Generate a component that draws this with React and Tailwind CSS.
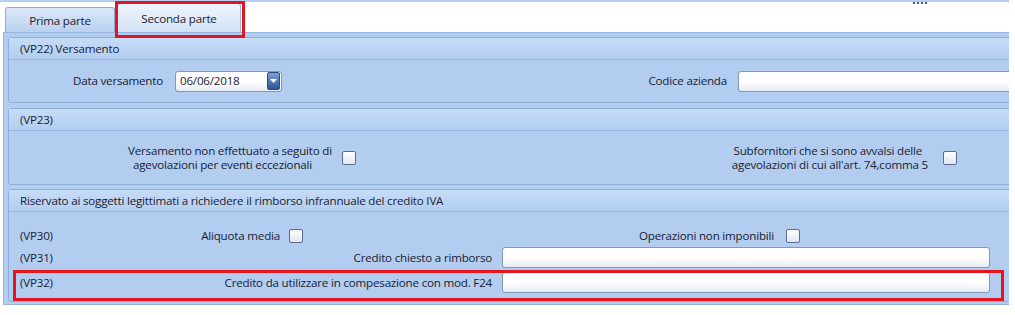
import React from "react";

// Two-part VAT form screen: tabs, then three grouped sections.

const Checkbox = ({ className = "" }) => (
  <div
    className={`h-[14px] w-[14px] shrink-0 rounded-[2px] border border-[#5b6d8c] bg-gradient-to-b from-white to-[#dfe7f3] ${className}`}
  />
);

const TextBox = ({ className = "", children }) => (
  <div
    className={`flex h-[21px] shrink-0 items-center rounded-[3px] border border-[#8797b3] bg-gradient-to-b from-white via-white to-[#e6ecf5] ${className}`}
  >
    {children}
  </div>
);

const Section = ({ title, bodyHeight, className = "", children }) => (
  <div
    className={`-mr-[12px] rounded-[3px] border border-[#8fadd8] bg-[#b2cdf0] ${className}`}
  >
    <div className="flex h-[22px] items-center border-b border-[#98b6de] bg-gradient-to-b from-[#c6dcf7] to-[#b3cef1] pl-[11px]">
      {title}
    </div>
    <div className={bodyHeight}>{children}</div>
  </div>
);

const App = () => {
  return (
    <div className="relative h-[315px] w-[1015px] overflow-hidden bg-white font-['Open_Sans',sans-serif] text-[11.6px] tracking-[-0.2px] text-[#1a2230]">
      <div className="w-[1009px] overflow-hidden">
        {/* top strip */}
        <div className="h-[2px] bg-[#b6cff0]" />

        {/* tabs */}
        <div className="flex h-[30px] items-end pl-[5px]">
          <div className="flex h-[25px] w-[110px] items-center justify-center rounded-t-[3px] border border-b-0 border-[#8eabd6] bg-gradient-to-b from-[#dce8f8] to-[#b9d1f0] pt-[1px]">
            Prima parte
          </div>
          <div className="ml-[2px] flex h-[29px] w-[124px] items-center justify-center rounded-t-[3px] border border-b-0 border-[#9ab7de] bg-gradient-to-b from-[#eef4fd] to-[#d3e3f7] pt-[2px]">
            Seconda parte
          </div>
        </div>

        {/* main panel */}
        <div className="ml-[3px] h-[273px] border border-r-0 border-[#97b4dc] bg-[#b1cdf0] pl-[4px] pt-[4px]">
          <Section title="(VP22) Versamento" bodyHeight="h-[42px]">
            <div className="flex h-full items-center">
              <div className="w-[154px] shrink-0 text-right">Data versamento</div>
              <TextBox className="ml-[12px] w-[107px] justify-between pl-[4px] pr-[1px]">
                <span>06/06/2018</span>
                <div className="flex h-[18px] w-[13px] items-center justify-center rounded-[2px] border border-[#2c4a7d] bg-gradient-to-b from-[#7d9fd3] to-[#2f5493]">
                  <svg width="7" height="4" viewBox="0 0 7 4">
                    <path d="M0 0 H7 L3.5 4 Z" fill="#ffffff" />
                  </svg>
                </div>
              </TextBox>
              <div className="w-[445px] shrink-0 text-right">Codice azienda</div>
              <TextBox className="ml-[11px] w-[300px]" />
            </div>
          </Section>

          <Section title="(VP23)" bodyHeight="h-[53px]" className="mt-[5px]">
            <div className="flex h-full items-center leading-[14px]">
              <div className="flex w-[323px] shrink-0 flex-col items-end">
                <span>Versamento non effettuato a seguito di</span>
                <span className="pr-[20px]">agevolazioni per eventi eccezionali</span>
              </div>
              <Checkbox className="ml-[10px]" />
              <div className="flex w-[572px] shrink-0 flex-col items-end">
                <span className="pr-[6px]">Subfornitori che si sono avvalsi delle</span>
                <span>agevolazioni di cui all'art. 74,comma 5</span>
              </div>
              <Checkbox className="ml-[15px]" />
            </div>
          </Section>

          <Section
            title="Riservato ai soggetti legittimati a richiedere il rimborso infrannuale del credito IVA"
            bodyHeight="h-[89px]"
            className="mt-[4px]"
          >
            <div className="pl-[11px] pt-[13px]">
              <div className="flex h-[21px] items-center">
                <span className="w-[60px] shrink-0">(VP30)</span>
                <span className="w-[200px] shrink-0 text-right">Aliquota media</span>
                <Checkbox className="ml-[9px]" />
                <span className="w-[471px] shrink-0 text-right">Operazioni non imponibili</span>
                <Checkbox className="ml-[12px]" />
              </div>
              <div className="mt-[1px] flex h-[21px] items-center">
                <span className="w-[60px] shrink-0">(VP31)</span>
                <span className="w-[412px] shrink-0 text-right">Credito chiesto a rimborso</span>
                <TextBox className="ml-[10px] w-[488px]" />
              </div>
              <div className="mt-[4px] flex h-[21px] items-center">
                <span className="w-[60px] shrink-0">(VP32)</span>
                <span className="w-[412px] shrink-0 text-right">
                  Credito da utilizzare in compesazione con mod. F24
                </span>
                <TextBox className="ml-[10px] h-[20px] w-[488px]" />
              </div>
            </div>
          </Section>
        </div>
      </div>

      {/* window grip dots */}
      <div className="absolute left-[913px] top-[2px] flex gap-[2px]">
        <div className="h-[2px] w-[2px] bg-[#3d5b8f]" />
        <div className="h-[2px] w-[2px] bg-[#3d5b8f]" />
        <div className="h-[2px] w-[2px] bg-[#3d5b8f]" />
        <div className="h-[2px] w-[2px] bg-[#3d5b8f]" />
      </div>

      {/* red highlight boxes */}
      <div className="absolute left-[115px] top-[1px] h-[37px] w-[130px] border-[3px] border-[#e3161f]" />
      <div className="absolute left-[13px] top-[270px] h-[31px] w-[991px] border-[3px] border-[#e3161f]" />
    </div>
  );
};

export default App;
